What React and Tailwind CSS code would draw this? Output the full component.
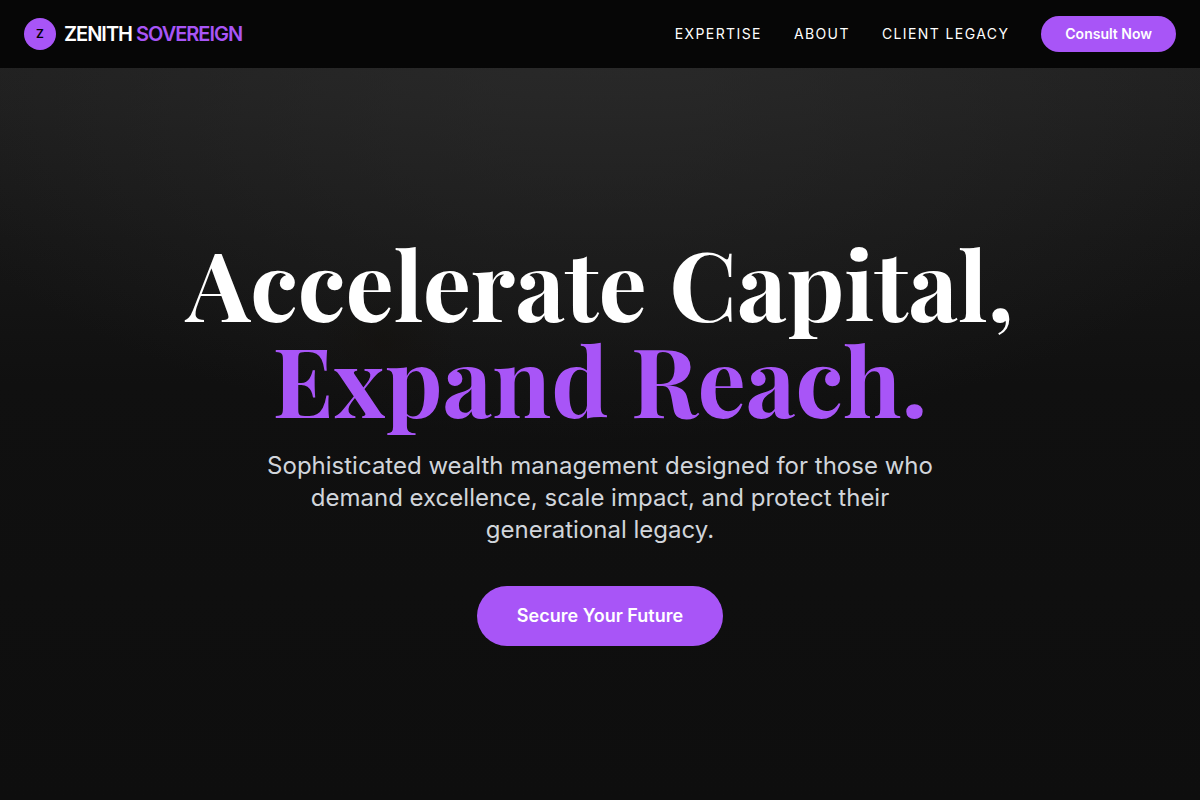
const links = [
  { label: 'Expertise', href: '#expertise' },
  { label: 'About', href: '#about' },
  { label: 'Client Legacy', href: '#legacy' },
];

function Header() {
  return (
    <header className="fixed inset-x-0 top-0 z-10 flex items-center justify-between bg-[#060606] px-6 py-4">
      <a href="#top" className="flex items-center gap-2">
        <span className="flex size-8 items-center justify-center rounded-full bg-[#a855f7] text-xs font-semibold text-black">
          Z
        </span>
        <span className="text-xl font-semibold tracking-tighter text-white">
          ZENITH <span className="text-[#a855f7]">SOVEREIGN</span>
        </span>
      </a>
      <nav className="flex items-center gap-8">
        {links.map((link) => (
          <a key={link.href} href={link.href} className="text-sm tracking-widest text-white uppercase">
            {link.label}
          </a>
        ))}
        <button type="button" className="rounded-full bg-[#a855f7] px-6 py-2 text-sm font-semibold text-white">
          Consult Now
        </button>
      </nav>
    </header>
  );
}

function Hero() {
  return (
    <section
      id="top"
      className="flex min-h-screen flex-col items-center justify-center bg-[radial-gradient(ellipse_6%_8%_at_32%_43%,#14110d80,transparent),radial-gradient(ellipse_65%_55%_at_50%_0%,#303030a6,transparent),linear-gradient(to_bottom,#222222_0%,#1e1e1e_12%,#161616_30%,#101010_48%,#0e0e0e_100%)] px-6 pt-20 text-center"
    >
      <h1 className="font-['Playfair_Display','Liberation_Serif',serif] text-8xl leading-none font-bold text-white">
        Accelerate Capital,
        <br />
        <span className="text-[#a855f7]">Expand Reach.</span>
      </h1>
      <p className="mt-6 max-w-2xl text-2xl text-[#d1d5db]">
        Sophisticated wealth management designed for those who demand excellence, scale impact, and protect their
        generational legacy.
      </p>
      <button type="button" className="mt-10 rounded-full bg-[#a855f7] px-10 py-4 text-lg font-semibold text-white">
        Secure Your Future
      </button>
    </section>
  );
}

export default function App() {
  return (
    <main className="min-h-screen bg-[#0e0e0e] font-['Inter',sans-serif]">
      <Header />
      <Hero />
    </main>
  );
}
